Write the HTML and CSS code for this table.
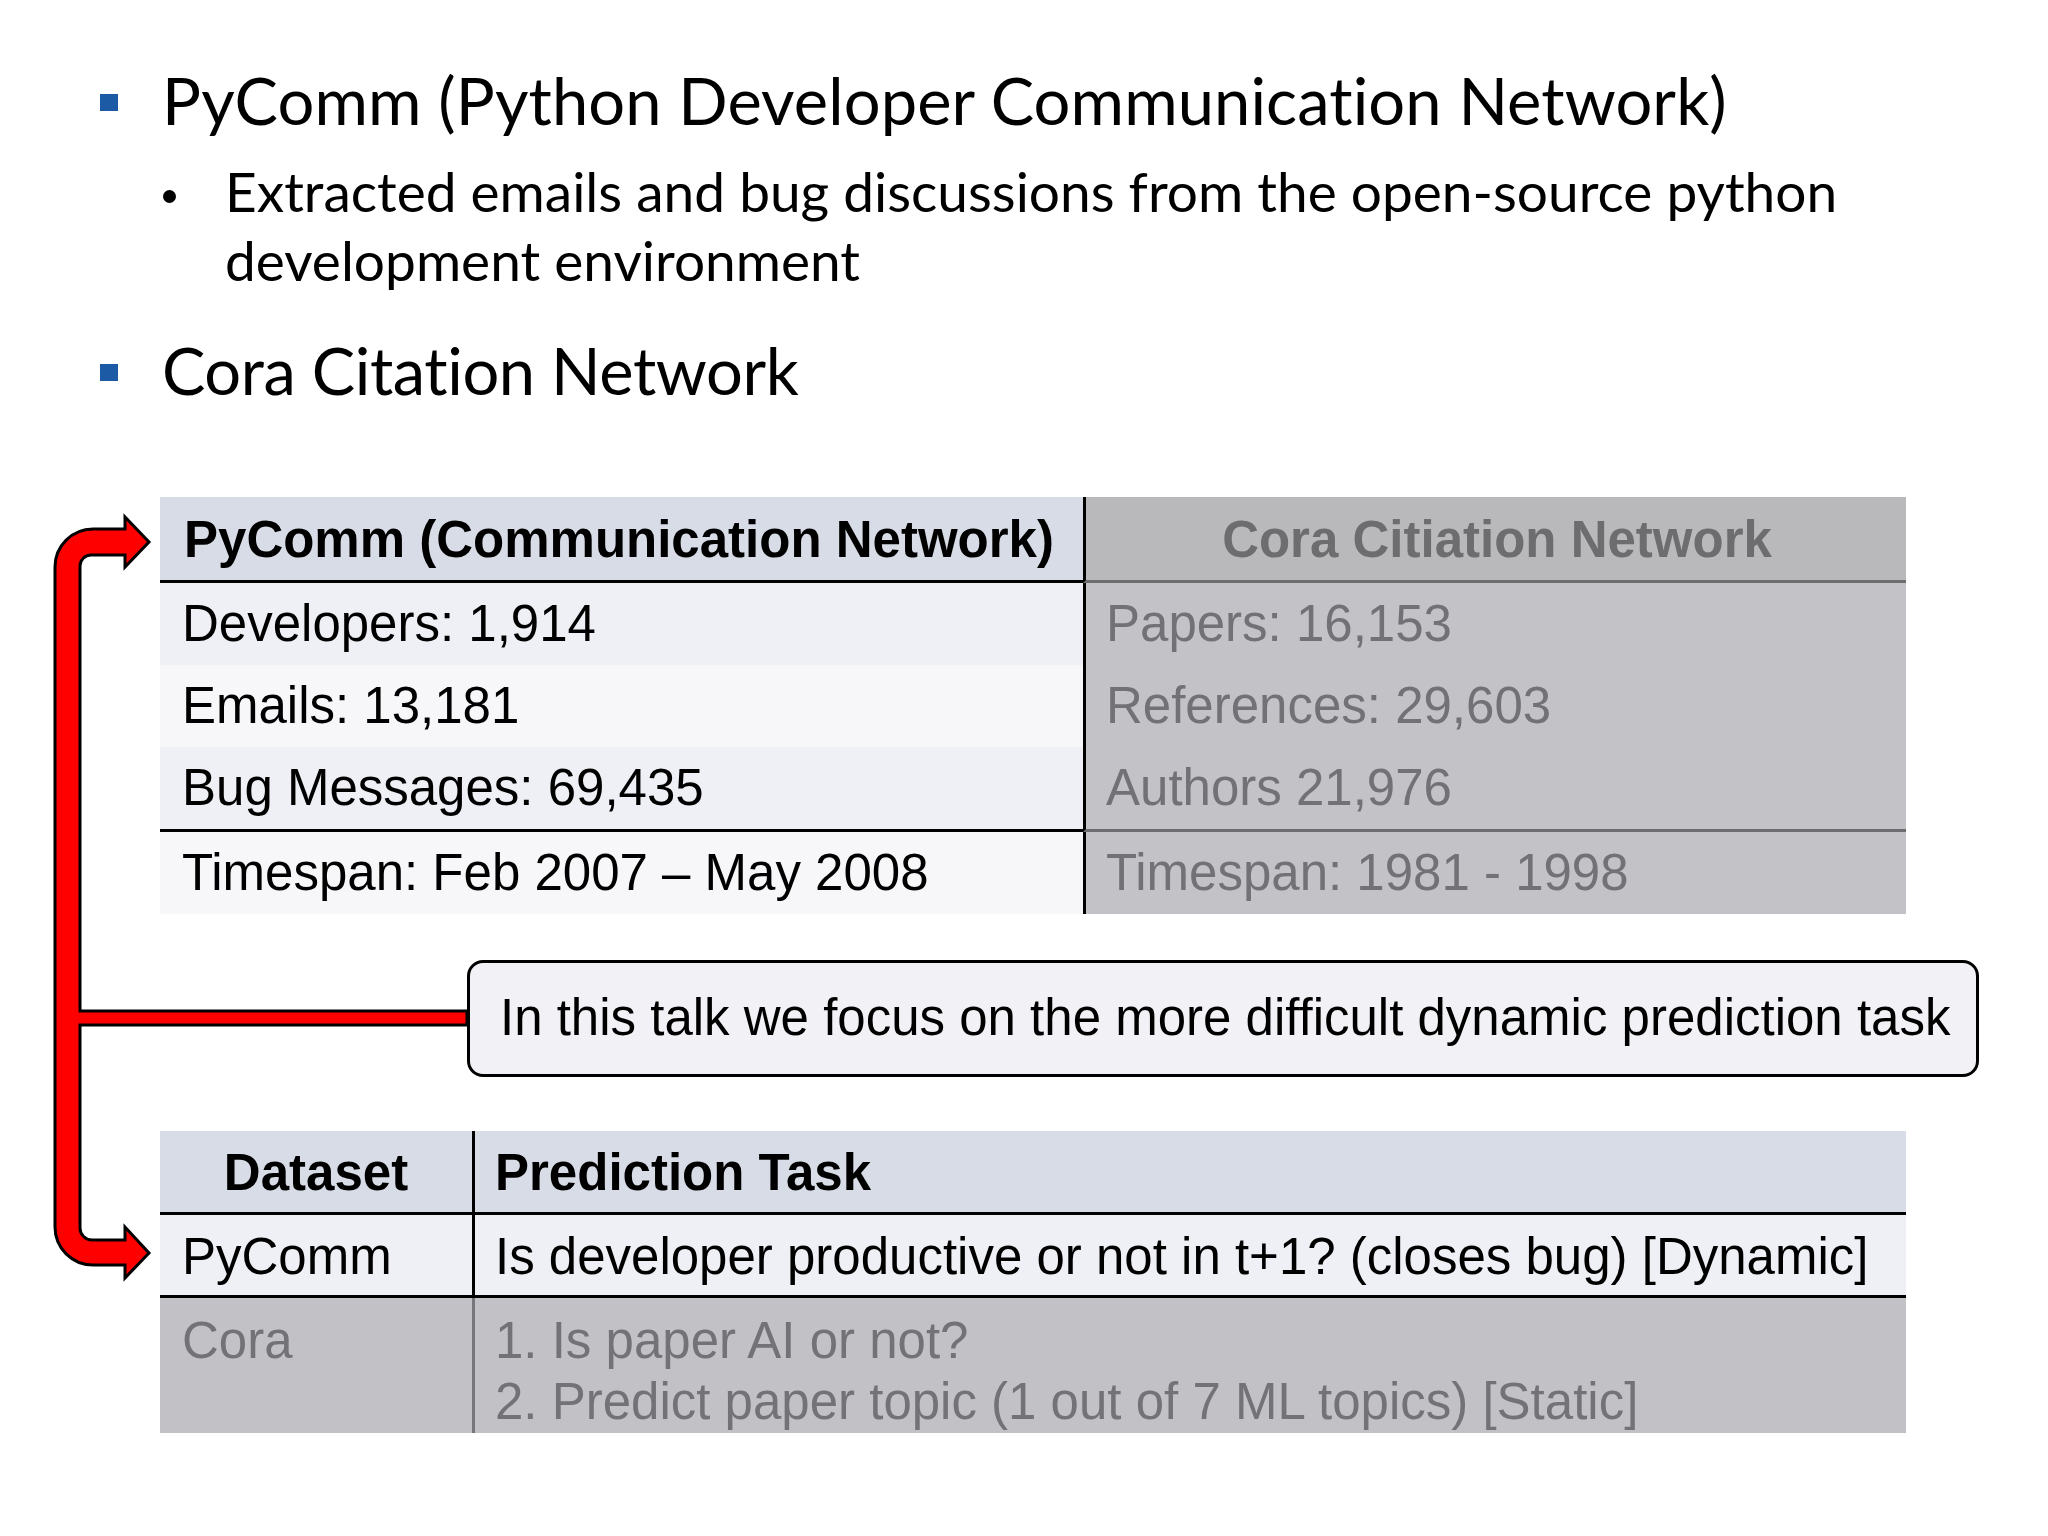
FILE: index.html
```html
<!DOCTYPE html>
<html lang="en">
<head>
<meta charset="utf-8">
<title>PyComm and Cora datasets</title>
<link rel="stylesheet" href="styles.css">
</head>
<body>
<div class="slide">
  <svg class="connector" width="480" height="1300" viewBox="0 0 480 1300" aria-hidden="true">
    <path d="M149,542 L125,517 L125,529 L93,529 A38,38 0 0 0 55,567 L55,1227 A38,38 0 0 0 93,1265 L125,1265 L125,1278 L149,1253 L125,1227 L125,1240 L92,1240 A12,12 0 0 1 80,1228 L80,1025 L467,1025 L467,1011 L80,1011 L80,566 A11,11 0 0 1 91,555 L125,555 L125,567 Z" fill="#ff0000" stroke="#000" stroke-width="3" stroke-linejoin="miter"/>
  </svg>

  <ul class="points">
    <li class="point"><span class="square"></span><span class="point-text">PyComm (Python Developer Communication Network)</span></li>
    <li class="subpoint"><span class="dot"></span><span class="sub-text">Extracted emails and bug discussions from the open-source python<br>development environment</span></li>
    <li class="point point-second"><span class="square"></span><span class="point-text">Cora Citation Network</span></li>
  </ul>

  <table class="stats">
    <thead>
      <tr>
        <th class="c-left">PyComm (Communication Network)</th>
        <th class="c-right">Cora Citiation Network</th>
      </tr>
    </thead>
    <tbody>
      <tr class="band-a">
        <td class="c-left">Developers: 1,914</td>
        <td class="c-right">Papers: 16,153</td>
      </tr>
      <tr class="band-b">
        <td class="c-left">Emails: 13,181</td>
        <td class="c-right">References: 29,603</td>
      </tr>
      <tr class="band-a row-split">
        <td class="c-left">Bug Messages: 69,435</td>
        <td class="c-right">Authors 21,976</td>
      </tr>
      <tr class="band-b">
        <td class="c-left">Timespan: Feb 2007 – May 2008</td>
        <td class="c-right">Timespan: 1981 - 1998</td>
      </tr>
    </tbody>
  </table>

  <div class="callout">In this talk we focus on the more difficult dynamic prediction task</div>

  <table class="tasks">
    <thead>
      <tr>
        <th class="t-name">Dataset</th>
        <th class="t-task">Prediction Task</th>
      </tr>
    </thead>
    <tbody>
      <tr class="task-active">
        <td class="t-name">PyComm</td>
        <td class="t-task">Is developer productive or not in t+1? (closes bug) [Dynamic]</td>
      </tr>
      <tr class="task-muted">
        <td class="t-name">Cora</td>
        <td class="t-task">1. Is paper AI or not?<br>2. Predict paper topic (1 out of 7 ML topics) [Static]</td>
      </tr>
    </tbody>
  </table>
</div>
</body>
</html>
```

FILE: styles.css
```css
* { box-sizing: border-box; }

html, body {
  margin: 0;
  padding: 0;
  background: #ffffff;
}

.slide {
  position: relative;
  width: 2048px;
  height: 1536px;
  overflow: hidden;
  background: #ffffff;
  font-family: "Liberation Sans", Arial, sans-serif;
  color: #000;
}

.connector {
  position: absolute;
  left: 0;
  top: 0;
}

/* ---------- bullet list ---------- */
.points {
  list-style: none;
  margin: 0;
  padding: 60px 0 0 100px;
  font-family: "Lato", "Noto Sans", sans-serif;
}

.point {
  display: flex;
  align-items: flex-start;
  font-size: 65px;
  line-height: 80px;
}

.point-text { letter-spacing: 0.1px; }

.square {
  flex: none;
  width: 18px;
  height: 17px;
  margin-top: 34px;
  margin-right: 44px;
  background: #1c5aa6;
}

.subpoint {
  display: flex;
  align-items: flex-start;
  margin: 17px 0 0 63px;
  font-size: 55px;
  line-height: 69px;
}

.dot {
  flex: none;
  width: 13px;
  height: 13px;
  margin-top: 33px;
  margin-right: 49px;
  border-radius: 50%;
  background: #000;
}

.point-second {
  margin-top: 35px;
}

.point-second .point-text { letter-spacing: -0.4px; }

/* ---------- shared table text ---------- */
.stats, .tasks {
  border-collapse: separate;
  border-spacing: 0;
  margin-left: 160px;
  width: 1746px;
  font-size: 51px;
  line-height: 58px;
  table-layout: fixed;
}

.stats th, .stats td, .tasks th, .tasks td {
  text-align: left;
  white-space: nowrap;
  padding: 12px 20px 12px 22px;
  vertical-align: top;
}

/* ---------- stats table ---------- */
.stats {
  margin-top: 87px;
}

.stats .c-left { width: 923px; }

.stats th {
  padding-top: 14px;
  padding-bottom: 11px;
  font-weight: bold;
}

.stats th.c-left {
  background: #d7dce6;
  border-bottom: 3px solid #000;
  padding-left: 24px;
}

.stats th.c-right {
  background: #b9b9bb;
  color: #6d6d6f;
  text-align: center;
  border-left: 3px solid #000;
  border-bottom: 3px solid #6d6d6f;
}

.stats td.c-right {
  border-left: 3px solid #000;
  background: #c3c2c7;
  color: #727276;
  padding-left: 20px;
}

.stats .band-a td.c-left { background: #eff0f5; }
.stats .band-b td.c-left { background: #f7f7fa; }

.stats .row-split td.c-left { border-bottom: 3px solid #000; }
.stats .row-split td.c-right { border-bottom: 3px solid #6d6d6f; }

/* ---------- callout ---------- */
.callout {
  margin: 46px 0 0 467px;
  width: 1512px;
  height: 117px;
  padding: 26px 30px 0 30px;
  border: 3px solid #000;
  border-radius: 16px;
  background: #f2f1f5;
  font-size: 51px;
  line-height: 58px;
  white-space: nowrap;
}

/* ---------- tasks table ---------- */
.tasks {
  margin-top: 54px;
}

.tasks .t-name { width: 312px; }

.tasks th {
  background: #d7dce6;
  font-weight: bold;
  padding-top: 13px;
  padding-bottom: 10px;
  border-bottom: 3px solid #000;
}

.tasks th.t-name { text-align: center; padding-left: 10px; padding-right: 10px; }
.tasks .t-task { border-left: 3px solid #000; padding-left: 20px; }

.tasks .task-active td {
  background: #eff0f6;
  padding-top: 13px;
  padding-bottom: 9px;
  border-bottom: 3px solid #000;
}

.tasks .task-muted td {
  background: #c2c1c6;
  color: #737377;
  line-height: 61px;
  padding-top: 12px;
  padding-bottom: 1px;
}

.tasks .task-muted td.t-task { border-left-color: #77777b; }
```
